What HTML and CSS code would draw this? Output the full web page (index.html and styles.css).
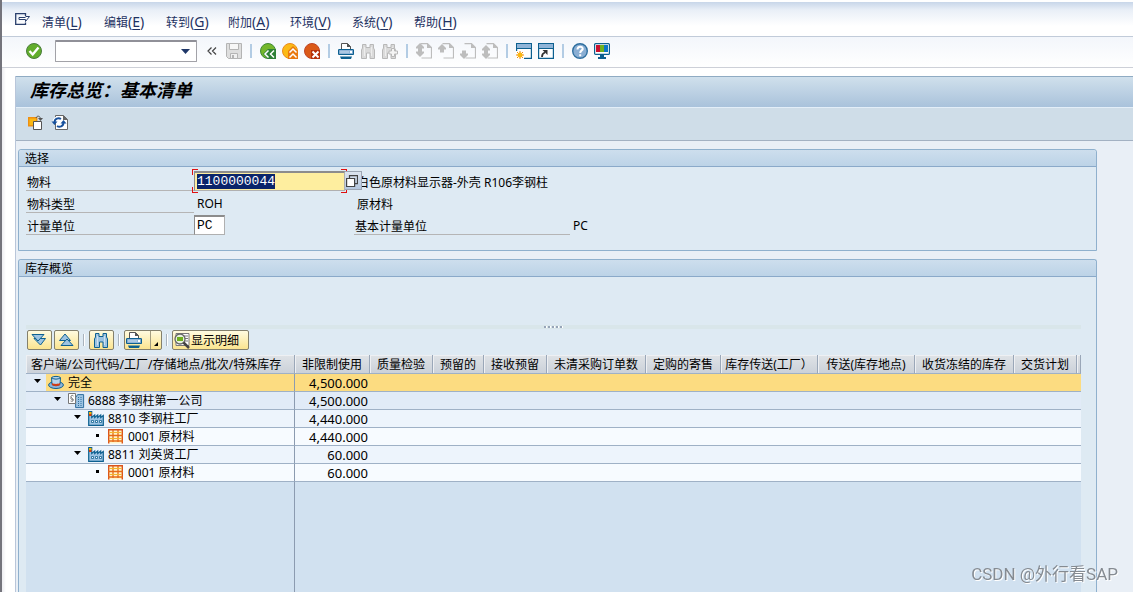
FILE: index.html
```html
<!DOCTYPE html>
<html lang="zh-CN">
<head>
<meta charset="utf-8">
<meta name="viewport" content="width=device-width, initial-scale=1">
<title>库存总览：基本清单</title>
<link rel="stylesheet" href="styles.css">
</head>
<body>
<svg class="sprite" aria-hidden="true">
  <symbol id="binoc" viewBox="0 0 16 16"><path d="M2.500 1.500h3.500v3h4v-3h3.500v3.500l1 2v8.500h-4.500V10H6.500v5.500H1.500V7l1-2z" /><path d="M4.500 4v9M11.500 4v9" stroke="#fff" stroke-opacity=".5" fill="none"/></symbol>
  <symbol id="page" viewBox="0 0 16 16"><path d="M4.500.700h7l4 4v10.300h-10" fill="none" stroke="#bdbdbd" stroke-width="1.200"/><path d="M11 0v5h5z" fill="#bdbdbd"/></symbol>
  <symbol id="up" viewBox="0 0 16 16"><path d="M4 0l4 4v1.500H6V8.500H2V5.500H0V4z" fill="#bdbdbd"/></symbol>
  <symbol id="down" viewBox="0 0 16 16"><path d="M4 16l4-4v-1.500H6V7.500H2v3H0V12z" fill="#bdbdbd"/></symbol>
  <symbol id="printer" viewBox="0 0 16 16"><path d="M3.500 6.500v-6h6l3 3v3" fill="#fff" stroke="#555"/><path d="M9 0v4h4z" fill="#555"/><rect x=".5" y="6.500" width="15" height="5" rx="1" fill="#8fb4d8" stroke="#0d6090" stroke-width="1.200"/><path d="M2 9h9" stroke="#c8dcee"/><path d="M12 8h2v2h-2z" fill="#fff"/><path d="M2 13.500h12l-1 2.500H3z" fill="#0d6090"/></symbol>
  <symbol id="factory" viewBox="0 0 16 16"><path d="M.7 14.300V.700h3V6.500l3-2.500v2.500l3-2.500v2.500l3-2.500v2.500l2.600-2v9.800z" fill="#9cc3e2" stroke="#0d6090" stroke-width="1.200"/><path d="M1 1h2.500v2H1z" fill="#f5b400"/><path d="M1 3h2.500v2H1z" fill="#d7400a"/><path d="M3.500 9.500h2v2h-2zM7.500 9.500h2v2h-2zM11.500 9.500h2v2h-2z" fill="#fff" stroke="#0d6090" stroke-width=".8"/></symbol>
  <symbol id="shelf" viewBox="0 0 16 16"><path d="M.7 14.500V.700h13.600V14.500" fill="#fff4c8" stroke="#d9531e" stroke-width="1.400"/><path d="M0 6.500h15M0 12h15M5 1v12M10 1v12" stroke="#e66b17" stroke-width="1.300"/><path d="M1.500 3.500h12M1.500 9.500h12" stroke="#f3b52d"/></symbol>
</svg>

<nav class="menubar" aria-label="菜单">
  <button class="menu-icon" type="button" aria-label="系统菜单"><svg class="icon" viewBox="0 0 16 16"><path d="M10.500 3V.700H.700v10.600h9.800V9.500" fill="none" stroke="#2a3f6c" stroke-width="1.300"/><path d="M4 4.500h6.500M10.500 3.500h4l-4 5v-2h-6.500v-2" fill="#fff" stroke="#2a3f6c"/></svg></button>
  <button class="menu" type="button">清单<span>(<u>L</u>)</span></button>
  <button class="menu" type="button">编辑<span>(<u>E</u>)</span></button>
  <button class="menu" type="button">转到<span>(<u>G</u>)</span></button>
  <button class="menu" type="button">附加<span>(<u>A</u>)</span></button>
  <button class="menu" type="button">环境<span>(<u>V</u>)</span></button>
  <button class="menu" type="button">系统<span>(<u>Y</u>)</span></button>
  <button class="menu" type="button">帮助<span>(<u>H</u>)</span></button>
</nav>

<div class="toolbar" role="toolbar" aria-label="标准工具栏">
  <button class="tool" type="button" aria-label="回车"><svg class="icon" viewBox="0 0 16 16"><circle cx="8" cy="8" r="7.500" fill="#62ad2c" stroke="#4a7d3c"/><path d="M3.500 8l3.200 3.500L12.500 4.500" fill="none" stroke="#fff" stroke-width="2.400"/></svg></button>
  <div class="command">
    <input type="text" class="command-input" aria-label="命令">
    <button class="command-arrow" type="button" aria-label="历史"><svg viewBox="0 0 9 5"><path d="M0 0h9L4.500 5z" fill="#1f3768"/></svg></button>
  </div>
  <button class="tool" type="button" aria-label="收起"><svg class="icon" viewBox="0 0 16 16"><path d="M7.500 4.500L4 8l3.500 3.500M12 4.500L8.500 8l3.500 3.500" fill="none" stroke="#444" stroke-width="1.200"/></svg></button>
  <button class="tool" type="button" aria-label="保存"><svg class="icon" viewBox="0 0 16 16"><path d="M.5.500h15v15H2.500l-2-2z" fill="#dedede" stroke="#b4b4b4"/><path d="M3.500.500h9v6h-9z" fill="#f7f7f7" stroke="#b4b4b4"/><path d="M4.500 10.500h7v5h-7z" fill="#f0f0f0" stroke="#b4b4b4"/><path d="M6 12h2v3H6z" fill="#b4b4b4"/></svg></button>
  <span class="sep"></span>
  <button class="tool" type="button" aria-label="返回"><svg class="icon" viewBox="0 0 16 16"><circle cx="8" cy="8" r="7.500" fill="#74b72b" stroke="#3f8a35"/><path d="M3 11l5-5h8v10H8z" fill="#2e8037"/><path d="M8.500 7.500L5 11l3.500 3.500M14 7.500L10.500 11l3.500 3.500" fill="none" stroke="#fff" stroke-width="1.500"/></svg></button>
  <button class="tool" type="button" aria-label="退出"><svg class="icon" viewBox="0 0 16 16"><circle cx="8" cy="8" r="7.500" fill="#fbba16" stroke="#ea8a1c"/><path d="M6 8l5-5 5 5v8H6z" fill="#e9780e"/><path d="M7.500 9.500L11 6l3.500 3.500M7.500 14.500L11 11l3.500 3.500" fill="none" stroke="#fff" stroke-width="1.500"/></svg></button>
  <button class="tool" type="button" aria-label="取消"><svg class="icon" viewBox="0 0 16 16"><circle cx="8" cy="8" r="7.500" fill="#db5a18" stroke="#bf4526"/><path d="M7 7h9v9H7z" fill="#b5310b"/><path d="M8.500 8.500l6 6M14.500 8.500l-6 6" stroke="#fff" stroke-width="2"/></svg></button>
  <span class="sep"></span>
  <button class="tool" type="button" aria-label="打印"><svg class="icon"><use href="#printer"/></svg></button>
  <button class="tool" type="button" aria-label="查找"><svg class="icon dim"><use href="#binoc"/></svg></button>
  <button class="tool" type="button" aria-label="继续查找"><svg class="icon dim" viewBox="0 0 16 16"><use href="#binoc" x="-1"/><path d="M9.500 5.500h3v2.500h3v3h-3v2.500h-3V11H7V8h2.500z" fill="#f4f4f4"/></svg></button>
  <span class="sep"></span>
  <button class="tool" type="button" aria-label="第一页"><svg class="icon" viewBox="0 0 16 16"><use href="#page"/><use href="#up"/><use href="#down" y="-2"/></svg></button>
  <button class="tool" type="button" aria-label="上一页"><svg class="icon" viewBox="0 0 16 16"><use href="#page"/><use href="#up" y="1"/></svg></button>
  <button class="tool" type="button" aria-label="下一页"><svg class="icon" viewBox="0 0 16 16"><use href="#page"/><use href="#down"/></svg></button>
  <button class="tool" type="button" aria-label="最后一页"><svg class="icon" viewBox="0 0 16 16"><use href="#page"/><use href="#up" y="2"/><use href="#down"/></svg></button>
  <span class="sep"></span>
  <button class="tool" type="button" aria-label="新会话"><svg class="icon" viewBox="0 0 16 16"><path d="M.6.600h14.800v14.800H.6z" fill="#fff" stroke="#0d6090" stroke-width="1.200"/><path d="M1 1h14v4H1z" fill="#8fb4d8"/><path d="M1 5.500h14" stroke="#0d6090"/><path d="M0 8h8v8H0z" fill="#fff"/><path d="M4 8v8M0 12h8M1 9l6 6M7 9l-6 6" stroke="#f08a12"/><circle cx="4" cy="12" r="2.500" fill="#fbb812"/></svg></button>
  <button class="tool" type="button" aria-label="快捷方式"><svg class="icon" viewBox="0 0 16 16"><path d="M.6.600h14.800v14.800H.6z" fill="#fff" stroke="#0d6090" stroke-width="1.200"/><path d="M1 1h14v4H1z" fill="#8fb4d8"/><path d="M1 5.500h14" stroke="#0d6090"/><path d="M4 14c0-3 1-4 3-4.500" fill="none" stroke="#333" stroke-width="1.800"/><path d="M4.500 7h5v5z" fill="#333"/></svg></button>
  <span class="sep"></span>
  <button class="tool" type="button" aria-label="帮助"><svg class="icon" viewBox="0 0 16 16"><circle cx="8" cy="8" r="7.300" fill="#8aaed3" stroke="#2f6f9f" stroke-width="1.400"/><path d="M5.500 6.500c0-4 5.500-3.500 5.200-.5C10.500 7.500 8.200 7.500 8.200 10M8.200 11.300v2" fill="none" stroke="#fff" stroke-width="2"/></svg></button>
  <button class="tool" type="button" aria-label="定制布局"><svg class="icon" viewBox="0 0 16 16"><rect x=".6" y=".6" width="14.800" height="10.800" rx="1" fill="#fff" stroke="#0d6090" stroke-width="1.200"/><path d="M2 2h4v7H2z" fill="#c8102e"/><path d="M6 2h4v7H6z" fill="#6fb01e"/><path d="M10 2h4v7h-4z" fill="#0b76c4"/><path d="M6 12h4v2h2v2H4v-2h2z" fill="#0d6090"/></svg></button>
</div>

<main class="screen">
  <h1 class="title">库存总览：基本清单</h1>
  <div class="app-toolbar">
    <button class="tool" type="button" aria-label="其他物料"><svg class="icon" viewBox="0 0 16 16"><path d="M.7 2.700h8v8h-8z" fill="#fbb812" stroke="#ee8f12" stroke-width="1.400"/><path d="M5.500 6.500h8v8h-8z" fill="#fff" stroke="#555"/><path d="M8 3c1-3 4.500-2 4.500 1" fill="none" stroke="#555"/><path d="M10 3h5l-2.500 3z" fill="#555"/></svg></button>
    <button class="tool" type="button" aria-label="刷新"><svg class="icon" viewBox="0 0 16 16"><path d="M3.500.500h8l4 4v10h-12z" fill="#fff" stroke="#666"/><path d="M11 0v5h5z" fill="#666"/><path d="M2.500 7.500c0-4 4-5 6.500-3.500M11.500 7.500c0 4-4 5-6.500 3.500" fill="none" stroke="#fff" stroke-width="4"/><path d="M2.500 7.500c0-4 4-5 6.500-3.500M11.500 7.500c0 4-4 5-6.500 3.500" fill="none" stroke="#17509c" stroke-width="2"/><path d="M-.5 6.500h6L2.500 10zM8.500 8.500h6L11.500 5z" fill="#17509c"/></svg></button>
  </div>

  <div class="content">
    <section class="panel">
      <h2 class="panel-title">选择</h2>
      <form class="fields">
        <label class="field-label" for="material">物料</label>
        <div class="material">
          <input class="field material-input" id="material" type="text" value="1100000044">
          <i class="corner tl"></i><i class="corner bl"></i><i class="corner tr"></i><i class="corner br"></i>
          <button class="match" type="button" aria-label="搜索帮助"><svg viewBox="0 0 12 12"><path d="M3.500 3V.600h8v8H9" fill="none" stroke="#444" stroke-width="1.200"/><path d="M.6 3.500h8v8h-8z" fill="#fff" stroke="#444" stroke-width="1.200"/></svg></button>
        </div>
        <output class="value wide">白色原材料显示器-外壳 R106李钢柱</output>
        <span class="field-label">物料类型</span>
        <output class="value">ROH</output>
        <output class="value wide">原材料</output>
        <label class="field-label" for="unit">计量单位</label>
        <div><input class="field unit-input" id="unit" type="text" value="PC"></div>
        <span class="field-label">基本计量单位</span>
        <output class="value">PC</output>
      </form>
    </section>

    <section class="panel overview">
      <h2 class="panel-title">库存概览</h2>
      <div class="overview-body">
        <div class="splitter"><span class="grip"></span></div>
        <div class="grid-toolbar" role="toolbar" aria-label="清单工具栏">
          <button class="key" type="button" aria-label="展开"><svg class="icon" viewBox="0 0 16 16"><path d="M3 6.500h11.500L9.500 13z" fill="#9cc3e2" stroke="#0d6090"/><path d="M1 2.500h12L7 9z" fill="#9cc3e2" stroke="#0d6090"/></svg></button>
          <button class="key" type="button" aria-label="折叠"><svg class="icon" viewBox="0 0 16 16"><path d="M1.500 8.500h11L7 2z" fill="#9cc3e2" stroke="#0d6090"/><path d="M3 13.500h12L9 7z" fill="#9cc3e2" stroke="#0d6090"/></svg></button>
          <span class="bar"></span>
          <button class="key" type="button" aria-label="查找"><svg class="icon blue"><use href="#binoc"/></svg></button>
          <span class="bar"></span>
          <button class="key split" type="button" aria-label="打印"><svg class="icon"><use href="#printer"/></svg><span class="drop"><svg viewBox="0 0 4 4"><path d="M4 0v4H0z"/></svg></span></button>
          <span class="bar"></span>
          <button class="key text" type="button"><svg class="icon" viewBox="0 0 16 16"><path d="M2 .5h13v12H2z" fill="#fff" stroke="#777"/><path d="M10 3h4M10 5.500h4M11 8h3" stroke="#777"/><circle cx="6" cy="6" r="5" fill="#e8f2dc" stroke="#666" stroke-width="1.300"/><path d="M3 4h6v4H3z" fill="#6fb01e"/><path d="M9.500 9.500l5.500 5.500" stroke="#444" stroke-width="2.500"/></svg>显示明细</button>
        </div>
        <table class="stock">
          <colgroup><col class="c-tree"><col class="c-m"><col class="c-s"><col class="c-xs"><col class="c-s"><col class="c-xl"><col class="c-m"><col class="c-l"><col class="c-l"><col class="c-xl"><col class="c-s"><col></colgroup>
          <thead>
            <tr><th>客户端/公司代码/工厂/存储地点/批次/特殊库存</th><th>非限制使用</th><th>质量检验</th><th>预留的</th><th>接收预留</th><th>未清采购订单数</th><th>定购的寄售</th><th>库存传送(工厂）</th><th>传送(库存地点)</th><th>收货冻结的库存</th><th>交货计划</th><th></th></tr>
          </thead>
          <tbody>
            <tr class="total"><td><div class="node l0"><svg class="tri" viewBox="0 0 7 4"><path d="M0 0h7L3.500 4z"/></svg><svg class="icon" viewBox="0 0 16 16"><ellipse cx="8" cy="10" rx="7.400" ry="3.500" fill="#8fb4d8" stroke="#0d6090"/><path d="M4 9.500L3.500 2.500C5 1 11 1 12.500 2.500L12 9.500c-2 1.500-6 1.500-8 0z" fill="#b9d4ea" stroke="#0d6090"/><path d="M4 8c2 1.200 6 1.200 8 0v2c-2 1.500-6 1.500-8 0z" fill="#d23c14"/><path d="M4 3c2 1.500 6 1.500 8 0" fill="none" stroke="#0d6090"/></svg>完全</div></td><td>4,500.000</td><td colspan="10"></td></tr>
            <tr class="company"><td><div class="node l1"><svg class="tri" viewBox="0 0 7 4"><path d="M0 0h7L3.500 4z"/></svg><svg class="icon" viewBox="0 0 16 16"><path d="M7.600 4.600l2-3h6v13h-8z" fill="#9cc3e2" stroke="#2f6f9f"/><path d="M10.500 4v10M13 4v10" fill="none" stroke="#2f6f9f" stroke-dasharray="1 1"/><path d="M.5.500h7v10h-7z" fill="#fff" stroke="#777"/><path d="M5.500 3C4 1.500 2.500 3 3 4.200S5.500 5.500 5.300 7 4 8.500 2.600 8M5 7C3 6.500 2.500 5.500 3 4.500" fill="none" stroke="#555" stroke-width=".8"/></svg>6888 李钢柱第一公司</div></td><td>4,500.000</td><td colspan="10"></td></tr>
            <tr class="plant"><td><div class="node l2"><svg class="tri" viewBox="0 0 7 4"><path d="M0 0h7L3.500 4z"/></svg><svg class="icon"><use href="#factory"/></svg>8810 李钢柱工厂</div></td><td>4,440.000</td><td colspan="10"></td></tr>
            <tr class="store"><td><div class="node l3"><svg class="tri" viewBox="0 0 7 4"><path d="M2 1h3v3H2z"/></svg><svg class="icon"><use href="#shelf"/></svg>0001 原材料</div></td><td>4,440.000</td><td colspan="10"></td></tr>
            <tr class="plant"><td><div class="node l2"><svg class="tri" viewBox="0 0 7 4"><path d="M0 0h7L3.500 4z"/></svg><svg class="icon"><use href="#factory"/></svg>8811 刘英贤工厂</div></td><td>60.000</td><td colspan="10"></td></tr>
            <tr class="store"><td><div class="node l3"><svg class="tri" viewBox="0 0 7 4"><path d="M2 1h3v3H2z"/></svg><svg class="icon"><use href="#shelf"/></svg>0001 原材料</div></td><td>60.000</td><td colspan="10"></td></tr>
          </tbody>
        </table>
        <div class="rest"><div class="rest-tree"></div></div>
      </div>
    </section>
  </div>
</main>
<div class="watermark">CSDN @外行看SAP</div>
<script src="app.js"></script>
</body>
</html>
```
FILE: app.js
```js
const material = document.getElementById("material");
material.focus();
material.select();
```
FILE: styles.css
```css
* { box-sizing: border-box; }
html { height: 100%; }
body {
  margin: 0;
  min-height: 100%;
  display: flex;
  flex-direction: column;
  border-left: 2px solid #74747c;
  background: linear-gradient(to right, #e4e4ea, #fff 6px);
  color: #000;
  font: 12px/16px "Noto Sans", "Noto Sans CJK SC", sans-serif;
}
button, input { font: inherit; color: inherit; margin: 0; }
button { border: 0; padding: 0; background: none; }
h1, h2 { margin: 0; }
.sprite { position: absolute; width: 0; height: 0; }
.icon { width: 16px; height: 16px; display: block; flex: none; overflow: visible; }
.dim { fill: #dadada; stroke: #b8b8b8; }
.blue { fill: #9cc3e2; stroke: #0d6090; }

.menubar {
  display: flex;
  align-items: center;
  height: 37px;
  padding: 7px 13px 0;
  border-top: 2px solid #fff;
  border-bottom: 1px solid #c1cbd9;
  background: linear-gradient(#c8d6e9, #e9eff7 8px, #fff 24px);
  color: #1f3262;
}
.menu-icon { width: 27px; padding-bottom: 4px; }
.menu { width: 62px; text-align: left; white-space: nowrap; }
.menu span { font-size: 14px; }
.menu u { text-underline-offset: 2px; }

.toolbar {
  display: flex;
  align-items: center;
  gap: 6px;
  height: 31px;
  padding: 0 24px 2px;
  border-bottom: 1px solid #cdd0d8;
  background: linear-gradient(#f3f6fb, #fff);
}
.tool { width: 16px; height: 16px; flex: none; }
.sep { width: 2px; height: 14px; margin: 0 2px; background: #b3cce4; flex: none; }
.command {
  display: flex;
  align-items: center;
  width: 142px;
  height: 22px;
  margin: 0 1px 0 7px;
  border: 1px solid #a2a2a8;
  border-top: 2px solid #909098;
  border-radius: 1px;
  background: #fff;
}
.command-input { flex: 1; min-width: 0; border: 0; padding: 0 3px; background: none; outline: 0; }
.command-arrow { width: 21px; height: 18px; display: flex; align-items: center; justify-content: center; }
.command-arrow svg { width: 9px; height: 5px; }

.screen {
  flex: 1;
  display: flex;
  flex-direction: column;
  margin: 8px 0 0 13px;
  border-left: 1px solid #b9c6da;
  background: #e9eff6;
}
.title {
  padding: 0 14px;
  height: 32px;
  border-top: 1px solid #8fabc3;
  border-bottom: 1px solid #e3eef8;
  background: linear-gradient(#d0e0ec, #a9c2db);
  font: italic 700 18px/24px "Noto Sans CJK SC", sans-serif;
}
.app-toolbar {
  display: flex;
  align-items: center;
  gap: 8px;
  height: 33px;
  padding: 0 12px 2px;
  border-bottom: 1px solid #a3b1c2;
  background: #cfdde8;
}
.content { flex: 1; display: flex; flex-direction: column; gap: 8px; padding: 8px 36px 0 2px; }
.panel { border: 1px solid #8fb0cd; border-radius: 3px 3px 0 0; background: #deeaf3; }
.panel-title {
  height: 17px;
  padding: 0 6px;
  border-bottom: 1px solid #8aa9c9;
  border-radius: 3px 3px 0 0;
  background: linear-gradient(#cddeed, #bcd3e7);
  font-size: 12px;
  line-height: 17px;
  font-weight: 400;
}

.fields {
  display: grid;
  grid-template-columns: 168px 160px 216px 1fr;
  grid-auto-rows: 22px;
  padding: 2px 7px 15px;
}
.field-label { border-bottom: 1px solid #b5b5b5; padding: 0 1px; line-height: 28px; }
.value { padding: 0 3px; line-height: 26px; white-space: nowrap; }
.wide { grid-column: span 2; line-height: 28px; }
.field {
  height: 20px;
  display: block;
  margin-top: 2px;
  border: 1px solid #b0b0b0;
  border-top: 2px solid #8c8c8c;
  border-left-color: #8c8c8c;
  padding: 0 2px;
  background: #fff;
  outline: 0;
  font: 13px/15px "Liberation Mono", monospace;
}
.field::selection { background: #0a246a; color: #fff; }
.unit-input { width: 31px; }
.material { position: relative; width: 152px; }
.material-input { width: 151px; background: #feee9f; }
.corner { position: absolute; width: 6px; height: 6px; border: 0 solid #e01010; }
.tl { left: -2px; top: 0; border-width: 1px 0 0 1px; }
.bl { left: -2px; bottom: -2px; border-width: 0 0 1px 1px; }
.tr { right: -1px; top: 0; border-width: 1px 1px 0 0; }
.br { right: -1px; bottom: -2px; border-width: 0 1px 1px 0; }
.match {
  position: absolute;
  left: 151px;
  top: 2px;
  width: 17px;
  height: 19px;
  padding-left: 1px;
  border: 1px solid #9da7b5;
  border-left: 0;
  background: linear-gradient(#dde5ef, #b4c7df);
}
.match svg { display: block; width: 12px; height: 12px; }

.overview { flex: 1; display: flex; flex-direction: column; border-bottom: 0; }
.overview-body { flex: 1; display: flex; flex-direction: column; padding: 48px 15px 0 7px; }
.splitter { display: flex; justify-content: center; height: 4px; padding-top: 1px; background: #d9e6ea; }
.grip { width: 20px; height: 2px; background: repeating-linear-gradient(to right, #97a5b8 0 2px, #fff 2px 3px, transparent 3px 4px); }
.grid-toolbar { display: flex; align-items: center; gap: 2px; height: 26px; padding: 1px 1px 5px; }
.key {
  display: flex;
  align-items: center;
  justify-content: center;
  width: 25px;
  height: 20px;
  border: 1px solid #84806c;
  border-radius: 2px;
  background: linear-gradient(#fffbe0, #fbe48f);
}
.key .icon { margin: 0 1px 0 0; }
.split { width: 38px; justify-content: space-between; padding-left: 1px; }
.drop { display: flex; align-items: flex-end; justify-content: center; width: 11px; height: 18px; padding-bottom: 3px; border-left: 1px solid #a39d80; }
.drop svg { width: 4px; height: 4px; }
.text { width: 77px; justify-content: flex-start; padding: 1px 0 0 1px; white-space: nowrap; }
.bar { width: 2px; height: 12px; margin: 0 2px; border-left: 1px solid #a9b3bd; border-right: 1px solid #fff; }

.stock { width: 100%; table-layout: fixed; border-collapse: separate; border-spacing: 0; }
.c-tree { width: 269px; }
.c-xs { width: 51px; }
.c-s { width: 63px; }
.c-m { width: 75px; }
.c-l { width: 97px; }
.c-xl { width: 99px; }
.stock th {
  height: 19px;
  padding: 2px 0 0;
  border-right: 1px solid #9aa7b8;
  border-bottom: 1px solid #9fb1c6;
  background: linear-gradient(#dfe3e7, #cbd1d9);
  box-shadow: inset 1px 1px #eef0f3;
  font-weight: 400;
  line-height: 16px;
  white-space: nowrap;
}
.stock th:first-child { padding-left: 5px; text-align: left; }
.stock td { height: 18px; padding: 1px 0 0; border-bottom: 1px solid #9fb1c6; line-height: 16px; white-space: nowrap; text-align: right; }
.stock td:first-child { border-right: 1px solid #8c9bb0; }
.stock td:nth-child(2) { padding-right: 2px; font-size: 13px; }
.total { background: #fcdc81; }
.total td:first-child { background: linear-gradient(to right, #e1ebf6 20px, #fcdc81 20px); }
.company { background: #e1ebf7; }
.plant { background: #edf4fc; }
.store { background: #f7fbff; }
.node { display: flex; align-items: center; height: 16px; gap: 4px; line-height: 18px; }
.node .icon { margin: 0 0 0 3px; }
.tri { width: 7px; height: 4px; margin-bottom: 4px; }
.l0 { padding-left: 8px; }
.l1 { padding-left: 28px; }
.l2 { padding-left: 48px; }
.l3 { padding-left: 68px; }
.rest { flex: 1; display: flex; min-height: 100px; background: #d1e1f0; }
.rest-tree { width: 269px; border-right: 1px solid #8c9bb0; }

.watermark {
  position: fixed;
  right: 15px;
  bottom: 6px;
  color: #858b92;
  font: 17px/24px Roboto, "Noto Sans CJK SC", sans-serif;
  text-shadow: 1px 1px #fff;
}
```
